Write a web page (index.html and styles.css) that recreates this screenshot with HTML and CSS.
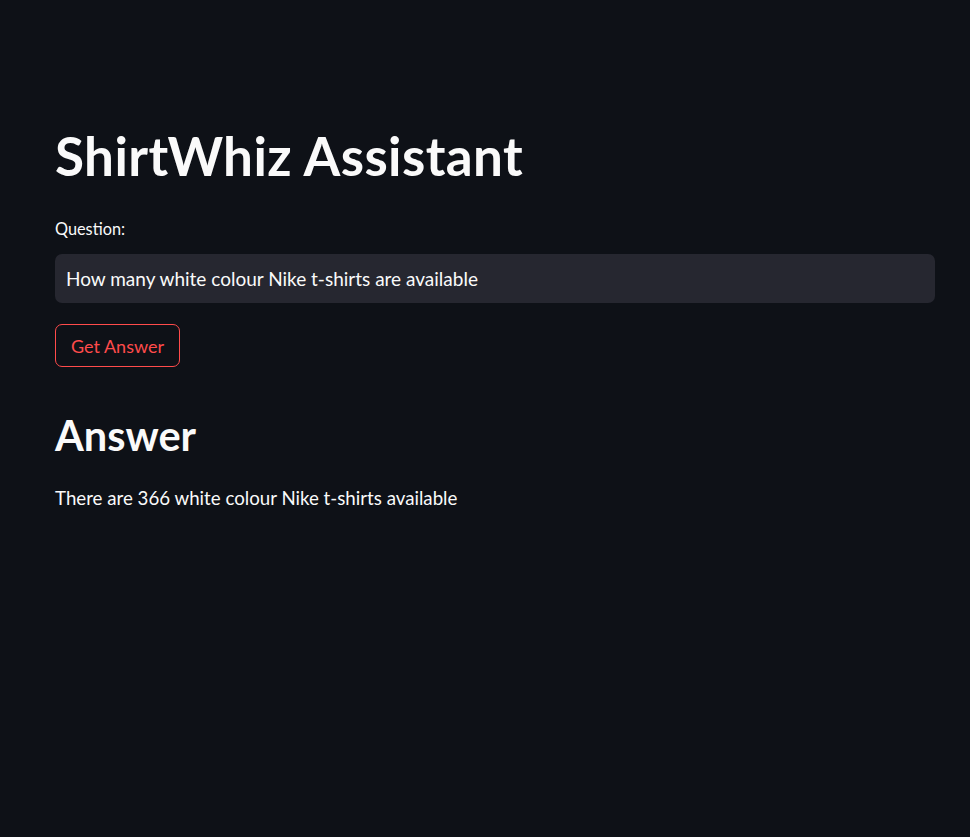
FILE: index.html
```html
<!DOCTYPE html>
<html lang="en">
<head>
<meta charset="utf-8">
<title>ShirtWhiz Assistant</title>
<link rel="stylesheet" href="styles.css">
</head>
<body>
<main class="app">
  <h1 class="title">ShirtWhiz Assistant</h1>
  <label class="field-label" for="q">Question:</label>
  <div class="input-wrap">
    <input id="q" class="text-input" type="text" value="How many white colour Nike t-shirts are available">
  </div>
  <button class="btn" type="button">Get Answer</button>
  <h2 class="subtitle">Answer</h2>
  <p class="answer">There are 366 white colour Nike t-shirts available</p>
</main>
</body>
</html>
```

FILE: styles.css
```css
html, body {
  margin: 0;
  padding: 0;
  background: #0e1117;
  height: 100%;
}
body {
  font-family: "Lato", "Noto Sans", sans-serif;
  color: #fafafa;
}
.app {
  width: 880px;
  margin-left: 55px;
  padding-top: 124px;
  display: flex;
  flex-direction: column;
  align-items: flex-start;
}
.title {
  margin: 0;
  font-size: 53px;
  font-weight: 700;
  line-height: 64px;
  letter-spacing: 0.4px;
}
.field-label {
  margin-top: 31px;
  font-size: 16.3px;
  line-height: 20px;
}
.input-wrap {
  margin-top: 15px;
  width: 100%;
  height: 49px;
  background: #262730;
  border-radius: 7px;
  display: flex;
  align-items: center;
  box-sizing: border-box;
}
.text-input {
  width: 100%;
  border: 0;
  outline: none;
  background: transparent;
  color: #fafafa;
  font-family: inherit;
  font-size: 19px;
  padding: 0 11px;
}
.btn {
  margin-top: 21px;
  height: 43px;
  padding: 0 15px;
  border: 1px solid #ff4b4b;
  border-radius: 7px;
  background: transparent;
  color: #ff4b4b;
  font-family: inherit;
  font-size: 18px;
}
.subtitle {
  margin: 43px 0 0;
  font-size: 41.5px;
  font-weight: 700;
  line-height: 50px;
}
.answer {
  margin: 26px 0 0;
  font-size: 18.7px;
  line-height: 24px;
}
```
